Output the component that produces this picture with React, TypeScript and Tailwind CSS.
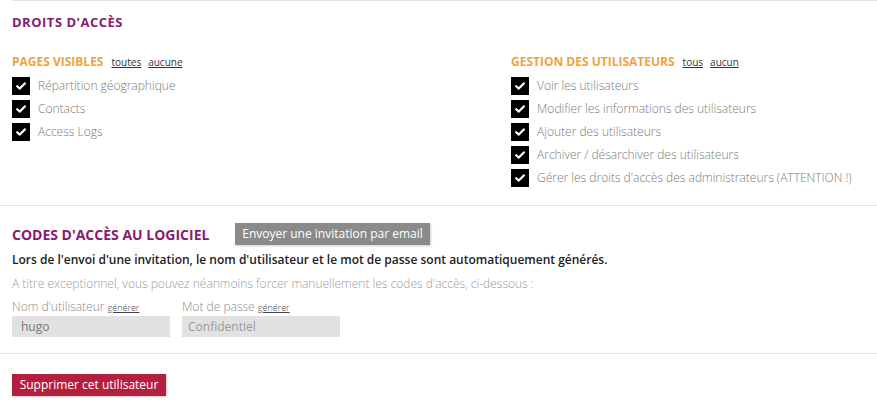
const font = { fontFamily: "'Open Sans', 'DejaVu Sans', sans-serif" };

function Box({ label }: { label: string }) {
  return (
    <div className="flex items-center h-[23px]">
      <span className="w-[18px] h-[18px] bg-black flex items-center justify-center shrink-0">
        <svg width="10" height="8" viewBox="0 0 10 8" fill="none">
          <path d="M1.2 4.2 L3.8 6.6 L8.8 1.4" stroke="white" strokeWidth="2.2" strokeLinecap="round" strokeLinejoin="round" />
        </svg>
      </span>
      <span className="ml-[8px] text-[12px] text-[#7a7a7a] font-light">{label}</span>
    </div>
  );
}

export default function App() {
  const pages = ["Répartition géographique", "Contacts", "Access Logs"];
  const users = [
    "Voir les utilisateurs",
    "Modifier les informations des utilisateurs",
    "Ajouter des utilisateurs",
    "Archiver / désarchiver des utilisateurs",
    "Gérer les droits d'accès des administrateurs (ATTENTION !)",
  ];

  return (
    <div className="w-[877px] h-[400px] bg-white overflow-hidden" style={font}>
      {/* Droits */}
      <div className="ml-[12px] border-t border-[#e2e2e2] pt-[12px] h-[205px]">
        <h2 className="text-[13px] font-bold text-[#8a1a6c] tracking-[0.5px]">DROITS D'ACCÈS</h2>
        <div className="flex mt-[20px]">
          <div className="w-[499px]">
            <div className="flex items-baseline h-[22px]">
              <span className="text-[12px] font-bold text-[#f2a23a]">PAGES VISIBLES</span>
              <span className="ml-[8px] text-[10px] text-[#333] underline">toutes</span>
              <span className="ml-[7px] text-[10px] text-[#333] underline">aucune</span>
            </div>
            {pages.map((p) => (
              <Box key={p} label={p} />
            ))}
          </div>
          <div>
            <div className="flex items-baseline h-[22px]">
              <span className="text-[12px] font-bold text-[#f2a23a]">GESTION DES UTILISATEURS</span>
              <span className="ml-[8px] text-[10px] text-[#333] underline">tous</span>
              <span className="ml-[7px] text-[10px] text-[#333] underline">aucun</span>
            </div>
            {users.map((u) => (
              <Box key={u} label={u} />
            ))}
          </div>
        </div>
      </div>

      {/* Codes */}
      <div className="border-t border-[#e2e2e2] h-[148px] px-[12px] pt-[17px]">
        <div className="flex items-center">
          <h2 className="text-[14px] font-bold text-[#8a1a6c] w-[223px]">CODES D'ACCÈS AU LOGICIEL</h2>
          <button className="bg-[#8a8a8a] text-white text-[12px] h-[22px] w-[195px] shadow-[1px_1px_2px_rgba(0,0,0,0.2)]">
            Envoyer une invitation par email
          </button>
        </div>
        <p className="mt-[6px] text-[12px] font-semibold text-[#222]">
          Lors de l'envoi d'une invitation, le nom d'utilisateur et le mot de passe sont automatiquement générés.
        </p>
        <p className="mt-[6px] text-[12px] text-[#9a9a9a] font-light">
          A titre exceptionnel, vous pouvez néanmoins forcer manuellement les codes d'accès, ci-dessous :
        </p>
        <div className="flex gap-[12px] mt-[5px]">
          <div className="w-[158px]">
            <div className="text-[12px] text-[#8a8a8a] font-light h-[17px]">
              Nom d'utilisateur <span className="text-[9px] text-[#444] underline">générer</span>
            </div>
            <div className="mt-[1px] h-[21px] bg-[#e2e2e2] text-[12px] text-[#777] pl-[9px] flex items-center">hugo</div>
          </div>
          <div className="w-[158px]">
            <div className="text-[12px] text-[#8a8a8a] font-light h-[17px]">
              Mot de passe <span className="text-[9px] text-[#444] underline">générer</span>
            </div>
            <div className="mt-[1px] h-[21px] bg-[#e2e2e2] text-[12px] text-[#999] pl-[6px] flex items-center">Confidentiel</div>
          </div>
        </div>
      </div>

      {/* Suppression */}
      <div className="border-t border-[#e2e2e2] px-[12px] pt-[17px]">
        <button className="bg-[#b51f3f] text-white text-[12px] h-[22px] w-[154px] shadow-[1px_1px_2px_rgba(0,0,0,0.2)]">
          Supprimer cet utilisateur
        </button>
      </div>
    </div>
  );
}
